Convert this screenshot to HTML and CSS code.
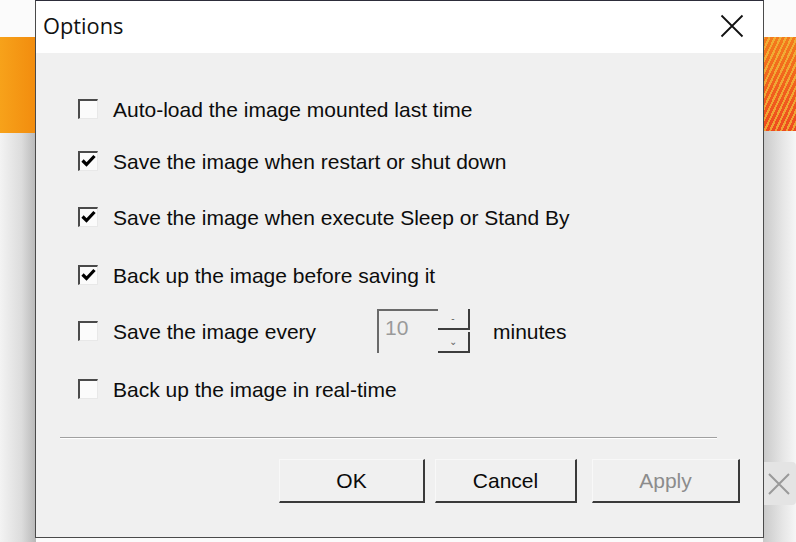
FILE: index.html
```html
<!DOCTYPE html>
<html>
<head>
<meta charset="utf-8">
<link rel="stylesheet" href="styles.css">
</head>
<body>
<div class="desktop">
  <div class="band band-left"></div>
  <div class="band band-right"></div>
  <div class="shadow-left"></div>
  <div class="shadow-right"></div>
  <div class="behind-close">
    <svg width="34" height="43" viewBox="0 0 34 43"><path d="M10 12 L30 32 M30 12 L10 32" stroke="#9a9a9a" stroke-width="2" fill="none"/></svg>
  </div>

  <div class="dialog">
    <div class="titlebar">
      <span class="title">Options</span>
      <svg class="close" width="24" height="24" viewBox="0 0 24 24"><path d="M1.5 1.5 L22.5 22.5 M22.5 1.5 L1.5 22.5" stroke="#111" stroke-width="1.8" fill="none"/></svg>
    </div>
    <div class="body">
      <div class="options">
        <div class="row r1"><span class="cb"></span><span class="lbl">Auto-load the image mounted last time</span></div>
        <div class="row r2"><span class="cb checked"><svg width="17" height="17" viewBox="0 0 17 17"><path d="M2.5 7.5 L6.5 11.5 L14.5 3" stroke="#000" stroke-width="3.2" fill="none"/></svg></span><span class="lbl">Save the image when restart or shut down</span></div>
        <div class="row r3"><span class="cb checked"><svg width="17" height="17" viewBox="0 0 17 17"><path d="M2.5 7.5 L6.5 11.5 L14.5 3" stroke="#000" stroke-width="3.2" fill="none"/></svg></span><span class="lbl">Save the image when execute Sleep or Stand By</span></div>
        <div class="row r4"><span class="cb checked"><svg width="17" height="17" viewBox="0 0 17 17"><path d="M2.5 7.5 L6.5 11.5 L14.5 3" stroke="#000" stroke-width="3.2" fill="none"/></svg></span><span class="lbl">Back up the image before saving it</span></div>
        <div class="row r5">
          <span class="cb"></span><span class="lbl every">Save the image every</span>
          <div class="spin">
            <div class="spin-edit">10</div>
            <div class="spin-btns">
              <div class="spin-btn"><span class="tick">-</span></div>
              <div class="spin-btn"><span class="tick">&#8964;</span></div>
            </div>
          </div>
          <span class="lbl minutes">minutes</span>
        </div>
        <div class="row r6"><span class="cb"></span><span class="lbl">Back up the image in real-time</span></div>
      </div>
      <div class="sep"></div>
      <div class="buttons">
        <button class="btn ok">OK</button>
        <button class="btn cancel">Cancel</button>
        <button class="btn apply" disabled>Apply</button>
      </div>
    </div>
  </div>
</div>
</body>
</html>
```
FILE: styles.css
```css
* { box-sizing: border-box; }
html, body { margin: 0; padding: 0; }
body {
  width: 796px;
  height: 542px;
  overflow: hidden;
  font-family: "Liberation Sans", Arial, sans-serif;
}
.desktop {
  position: relative;
  width: 796px;
  height: 542px;
  background: #fbfbfb;
}
.band {
  position: absolute;
  top: 37px;
  height: 96px;
}
.band-left {
  left: 0;
  width: 36px;
  background: linear-gradient(to right, #f7a21a, #f28c0e);
}
.band-right {
  left: 763px;
  width: 33px;
  height: 94px;
  background:
    repeating-linear-gradient(115deg, rgba(240,190,60,0.75) 0 2px, rgba(0,0,0,0) 2px 5px),
    linear-gradient(to bottom, #f47a1c, #ee4a1e);
}
.shadow-left {
  position: absolute;
  left: 0;
  top: 133px;
  width: 36px;
  height: 409px;
  background: linear-gradient(to right, #f3f3f3 0%, #dcdcdc 60%, #b8b8b8 100%);
}
.shadow-right {
  position: absolute;
  left: 763px;
  top: 131px;
  width: 33px;
  height: 411px;
  background: linear-gradient(to right, #c9c9c9 0%, #e6e6e6 60%, #f6f6f6 100%);
}
.behind-close {
  position: absolute;
  left: 763px;
  top: 462px;
  width: 33px;
  height: 43px;
  background: #e4e4e4;
  border-radius: 0 4px 4px 0;
}
.behind-close svg { display: block; margin-left: -4px; }

.dialog {
  position: absolute;
  left: 35px;
  top: 0;
  width: 729px;
  height: 538px;
  background: #f0f0f0;
  border: 1px solid #4a4a4a;
  border-top-color: #2d2d3a;
  display: flex;
  flex-direction: column;
}
.titlebar {
  height: 52px;
  background: #ffffff;
  display: flex;
  align-items: center;
  justify-content: space-between;
  padding: 0 19px 3px 7px;
}
.title {
  font-family: "Open Sans", "Noto Sans", sans-serif;
  font-size: 21.8px;
  color: #111;
}
.close { display: block; }
.body {
  flex: 1;
  display: flex;
  flex-direction: column;
  padding: 33px 46px 0 24px;
}
.options {
  display: grid;
  grid-template-rows: 48px 56px 56px 60px 52px 64px;
  padding-left: 18px;
}
.row {
  display: flex;
  align-items: center;
}
.cb {
  width: 20px;
  height: 20px;
  flex: none;
  background: #fbfbfb;
  border-top: 2px solid #4a4a4a;
  border-left: 2px solid #4a4a4a;
  border-right: 1px solid #e8e8e8;
  border-bottom: 1px solid #e8e8e8;
  position: relative;
  margin-top: -2px;
}
.cb svg { position: absolute; left: 0; top: 0; }
.lbl {
  margin-left: 15px;
  font-size: 21px;
  color: #0c0c0c;
  white-space: nowrap;
}
.lbl.every { width: 264px; }
.spin {
  display: flex;
  height: 44px;
  margin-top: -2px;
}
.spin-edit {
  width: 61px;
  height: 44px;
  border-top: 2px solid #6a6a6a;
  border-left: 2px solid #6a6a6a;
  background: #f0f0f0;
  color: #9a9a9a;
  font-size: 21px;
  padding: 5px 0 0 6px;
}
.spin-btns {
  width: 32px;
  display: flex;
  flex-direction: column;
  gap: 2px;
}
.spin-btn {
  flex: 1;
  border-right: 2px solid #3d3d3d;
  border-bottom: 2px solid #3d3d3d;
  display: flex;
  align-items: center;
  justify-content: center;
  color: #666;
  font-size: 10px;
}
.lbl.minutes { margin-left: 23px; }

.sep {
  margin-top: 15px;
  height: 2px;
  border-top: 1px solid #a0a0a0;
  border-bottom: 1px solid #ffffff;
}
.buttons {
  display: flex;
  justify-content: flex-end;
  margin-top: 20px;
  margin-right: -23px;
}
.btn {
  height: 44px;
  background: #f0f0f0;
  border: none;
  border-right: 2px solid #3a3a3a;
  border-bottom: 2px solid #3a3a3a;
  border-top: 1px solid #f8f8f8;
  border-left: 1px solid #f8f8f8;
  font-family: "Liberation Sans", Arial, sans-serif;
  font-size: 21px;
  color: #0a0a0a;
  padding: 0;
}
.ok { width: 146px; }
.cancel { width: 142px; margin-left: 10px; }
.apply { width: 148px; margin-left: 15px; color: #8c8c8c; }
```
